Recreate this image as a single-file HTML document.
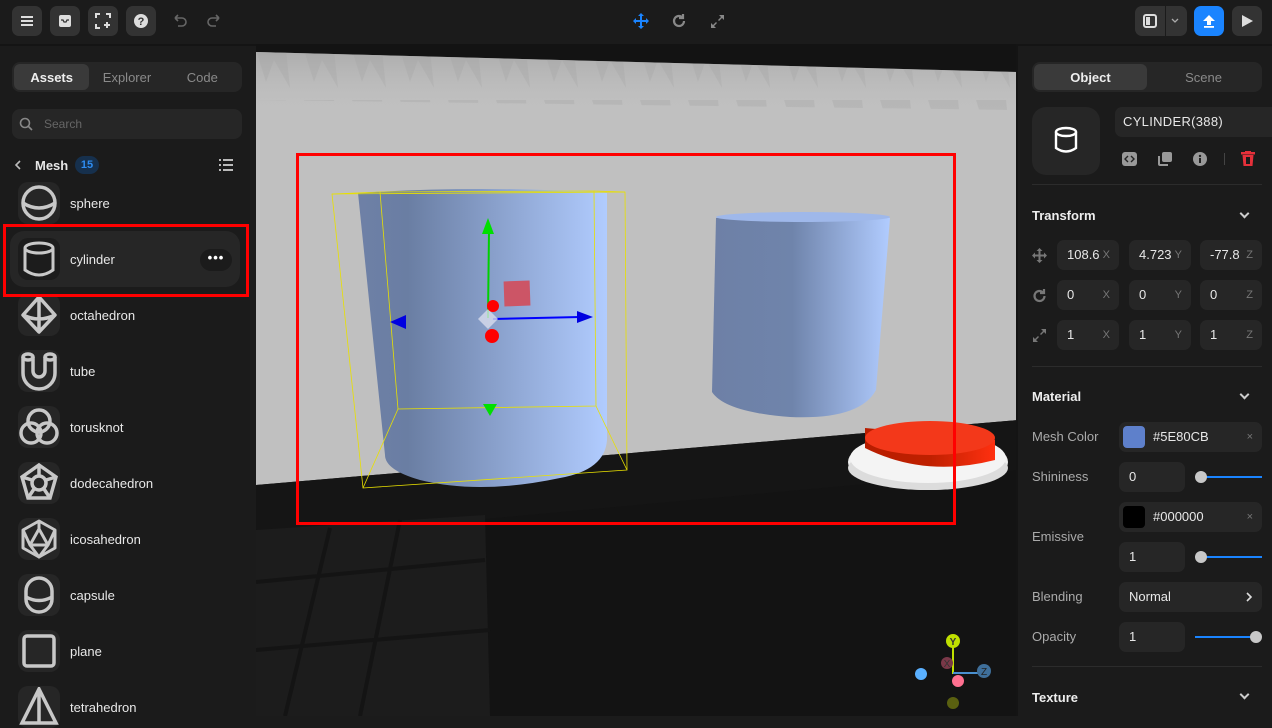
<!DOCTYPE html>
<html><head><meta charset="utf-8"><style>
*{box-sizing:border-box;margin:0;padding:0}
body{width:1272px;height:716px;overflow:hidden;background:#1b1b1b;font-family:"Liberation Sans",sans-serif;color:#e6e6e6;font-size:13px;position:relative}
.a{position:absolute}
.btn{position:absolute;width:30px;height:30px;border-radius:7px;background:#333;display:flex;align-items:center;justify-content:center}
.tabs{position:absolute;height:30px;background:#262626;border-radius:8px;display:flex;padding:2px}
.tabs div{flex:1;display:flex;align-items:center;justify-content:center;color:#8a8a8a;font-size:13px;border-radius:6px}
.tabs .on{background:#3a3a3a;color:#eee;font-weight:bold}
.item{position:absolute;left:18px;width:42px;height:42px;border-radius:10px;background:#262626;display:flex;align-items:center;justify-content:center}
.lbl{position:absolute;left:70px;font-size:13px;color:#e8e8e8}
.f{position:absolute;height:30px;background:#262626;border-radius:7px;font-size:13px;color:#e8e8e8;padding-left:10px;line-height:30px}
.f i{position:absolute;right:9px;font-style:normal;color:#777;font-size:11px}
.h{position:absolute;left:1032px;font-weight:bold;font-size:13px;color:#eee}
.chev{position:absolute;left:1241px;width:7px;height:7px;border-right:2px solid #ccc;border-bottom:2px solid #ccc;transform:rotate(45deg)}
.rl{position:absolute;left:1032px;color:#aaa;font-size:13px}
.div{position:absolute;left:1032px;width:230px;height:1px;background:#2c2c2c}
</style></head><body>
<!-- top bar -->
<div class="a" style="left:0;top:44px;width:1272px;height:2px;background:#141414"></div>
<div class="btn" style="left:12px;top:6px"><svg width="14" height="12"><path d="M1 2h12M1 6h12M1 10h12" stroke="#ddd" stroke-width="2"/></svg></div>
<div class="btn" style="left:50px;top:6px"><svg width="14" height="14"><rect x="1" y="1" width="12" height="12" rx="2" fill="#ddd"/><path d="M3 6h2l1 2h2l1-2h2" stroke="#333" stroke-width="1.3" fill="none"/></svg></div>
<div class="btn" style="left:88px;top:6px"><svg width="16" height="16" fill="none" stroke="#ddd" stroke-width="2"><path d="M1 5V1h4M11 1h4v4M1 11v4h4M12 9v6M9 12h6"/></svg></div>
<div class="btn" style="left:126px;top:6px"><svg width="16" height="16"><circle cx="8" cy="8" r="7" fill="#ddd"/><text x="8" y="12" font-size="11" font-weight="bold" text-anchor="middle" fill="#333" font-family="Liberation Sans">?</text></svg></div>
<svg class="a" style="left:172px;top:14px" width="50" height="16" fill="none" stroke="#666" stroke-width="1.6"><path d="M3 4h7a4 4 0 010 8H6M3 4l3-3M3 4l3 3"/><path d="M47 4h-7a4 4 0 000 8h4M47 4l-3-3M47 4l-3 3"/></svg>
<svg class="a" style="left:632px;top:12px" width="18" height="18"><path d="M9 1l3 3H10v4h4V6l3 3-3 3v-2h-4v4h2l-3 3-3-3h2v-4H4v2L1 9l3-3v2h4V4H6z" fill="#1a84ff"/></svg>
<svg class="a" style="left:671px;top:13px" width="16" height="16" fill="none" stroke="#888" stroke-width="2.2"><path d="M13 8a5 5 0 11-1.5-3.6"/><path d="M12 1v4H8" /></svg>
<svg class="a" style="left:710px;top:14px" width="15" height="15" fill="#888"><path d="M9 1h5v5l-2-2-3 3-1-1 3-3zM6 14H1V9l2 2 3-3 1 1-3 3z"/></svg>
<div class="a" style="left:1135px;top:6px;width:52px;height:30px;border-radius:7px;background:#333"></div>
<div class="a" style="left:1165px;top:6px;width:1px;height:30px;background:#1b1b1b"></div>
<svg class="a" style="left:1143px;top:14px" width="14" height="14"><rect x="1" y="1" width="12" height="12" rx="2" fill="none" stroke="#ddd" stroke-width="2"/><rect x="3" y="3" width="4" height="8" fill="#ddd"/></svg>
<svg class="a" style="left:1171px;top:18px" width="8" height="6"><path d="M1 1l3 3 3-3" stroke="#aaa" fill="none" stroke-width="1.3"/></svg>
<div class="btn" style="left:1194px;top:6px;background:#1a84ff"><svg width="14" height="14"><path d="M7 1l6 6H9v4H5V7H1z" fill="#fff"/><rect x="2" y="12" width="10" height="1.8" fill="#fff"/></svg></div>
<div class="btn" style="left:1232px;top:6px"><svg width="12" height="14"><path d="M1 1l11 6-11 6z" fill="#ddd"/></svg></div>

<!-- left panel -->
<div class="tabs" style="left:12px;top:62px;width:230px"><div class="on">Assets</div><div>Explorer</div><div>Code</div></div>
<div class="a" style="left:12px;top:109px;width:230px;height:30px;background:#262626;border-radius:8px"></div>
<svg class="a" style="left:19px;top:117px" width="14" height="14" fill="none" stroke="#888" stroke-width="1.6"><circle cx="6" cy="6" r="4.5"/><path d="M9.5 9.5L13 13"/></svg>
<div class="a" style="left:44px;top:117px;color:#666;font-size:12px">Search</div>
<svg class="a" style="left:14px;top:160px" width="8" height="10"><path d="M6 1L2 5l4 4" stroke="#bbb" fill="none" stroke-width="1.6"/></svg>
<div class="a" style="left:35px;top:158px;font-weight:bold;font-size:13px">Mesh</div>
<div class="a" style="left:75px;top:156px;width:24px;height:18px;border-radius:9px;background:#16304d;color:#2e8cf0;font-size:11px;text-align:center;line-height:18px;font-weight:bold">15</div>
<svg class="a" style="left:219px;top:158px" width="14" height="14" fill="#bbb"><rect x="0" y="1" width="2" height="2"/><rect x="0" y="6" width="2" height="2"/><rect x="0" y="11" width="2" height="2"/><rect x="4" y="1" width="10" height="2"/><rect x="4" y="6" width="10" height="2"/><rect x="4" y="11" width="10" height="2"/></svg>
<div class="a" style="left:10px;top:231px;width:230px;height:56px;border-radius:14px;background:#262626"></div>
<div class="a" style="left:200px;top:249px;width:32px;height:22px;border-radius:11px;background:#1b1b1b;color:#fff;text-align:center;font-weight:bold;line-height:18px;letter-spacing:1px">•••</div>

<div class="item" style="top:182px;background:#262626"><svg width="36" height="36" fill="none" stroke="#c8c8c8" stroke-width="3.5"><circle cx="18" cy="18" r="16"/><path d="M2 18q16 10 32 0"/></svg></div>
<div class="lbl" style="top:196px">sphere</div>
<div class="item" style="top:238px;background:#1c1c1c"><svg width="36" height="38" fill="none" stroke="#c8c8c8" stroke-width="3"><ellipse cx="18" cy="8" rx="14" ry="5"/><path d="M4 8v22q14 10 28 0V8"/></svg></div>
<div class="lbl" style="top:252px">cylinder</div>
<div class="item" style="top:294px"><svg width="38" height="40" fill="none" stroke="#c8c8c8" stroke-width="3.5" stroke-linejoin="round"><path d="M19 2L35 20 19 37 3 20zM3 20q16 8 32 0M19 2v35"/></svg></div>
<div class="lbl" style="top:308px">octahedron</div>
<div class="item" style="top:350px"><svg width="38" height="40" fill="none" stroke="#c8c8c8" stroke-width="3.5"><path d="M3 6v16a16 16 0 0032 0V6M13 6v14a6 6 0 0012 0V6"/><ellipse cx="8" cy="6" rx="5" ry="3"/><ellipse cx="30" cy="6" rx="5" ry="3"/></svg></div>
<div class="lbl" style="top:364px">tube</div>
<div class="item" style="top:406px"><svg width="40" height="40" fill="none" stroke="#c8c8c8" stroke-width="3.5"><circle cx="20" cy="14" r="11"/><circle cx="12" cy="26" r="10"/><circle cx="28" cy="26" r="10"/></svg></div>
<div class="lbl" style="top:420px">torusknot</div>
<div class="item" style="top:462px"><svg width="40" height="40" fill="none" stroke="#c8c8c8" stroke-width="3.5"><path d="M20 2L37 14 31 35H9L3 14z"/><circle cx="20" cy="20" r="7"/><path d="M20 2v11M37 14l-10 3M31 35l-6-9M9 35l6-9M3 14l10 3"/></svg></div>
<div class="lbl" style="top:476px">dodecahedron</div>
<div class="item" style="top:518px"><svg width="40" height="40" fill="none" stroke="#c8c8c8" stroke-width="3" stroke-linejoin="round"><path d="M20 2l16 9v18l-16 9-16-9V11z"/><path d="M20 10l9 16H11zM20 2v8M4 11l7 15M36 11l-7 15M11 26l9 12 9-12"/></svg></div>
<div class="lbl" style="top:532px">icosahedron</div>
<div class="item" style="top:574px"><svg width="34" height="40" fill="none" stroke="#c8c8c8" stroke-width="3.5"><path d="M4 16a13 13 0 0126 0v8a13 13 0 01-26 0z"/><path d="M4 22q13 7 26 0"/></svg></div>
<div class="lbl" style="top:588px">capsule</div>
<div class="item" style="top:630px"><svg width="36" height="36"><rect x="3" y="3" width="30" height="30" rx="3" fill="none" stroke="#c8c8c8" stroke-width="3.5"/></svg></div>
<div class="lbl" style="top:644px">plane</div>
<div class="item" style="top:686px"><svg width="40" height="40" fill="none" stroke="#c8c8c8" stroke-width="3.5"><path d="M20 2L37 36H3zM20 2v34"/></svg></div>
<div class="lbl" style="top:700px">tetrahedron</div>
<div class="a" style="left:3px;top:224px;width:246px;height:73px;border:3px solid #ff0000"></div>

<!-- viewport -->
<svg class="a" style="left:256px;top:44px" width="762" height="672" viewBox="256 44 762 672">
<defs>
<linearGradient id="c1" x1="0" x2="1"><stop offset="0" stop-color="#6e80a6"/><stop offset="0.2" stop-color="#6a7ea3"/><stop offset="1" stop-color="#b1ccff"/></linearGradient>
<linearGradient id="c2" x1="0" x2="1"><stop offset="0" stop-color="#6e80a6"/><stop offset="0.45" stop-color="#6f84ab"/><stop offset="1" stop-color="#b1ccff"/></linearGradient>
<linearGradient id="rb" x1="0" x2="1"><stop offset="0" stop-color="#b81d00"/><stop offset="0.5" stop-color="#bf2000"/><stop offset="1" stop-color="#ff3010"/></linearGradient>
<linearGradient id="fade" x1="0" y1="0" x2="0" y2="1"><stop offset="0" stop-color="#a0a0a0" stop-opacity="0.6"/><stop offset="1" stop-color="#c0c0c0" stop-opacity="0"/></linearGradient>
<pattern id="saw" x="256" y="50" width="48" height="50" patternUnits="userSpaceOnUse"><path d="M0 0h30L34 38 18 10 10 32z" fill="#a2a2a2" opacity="0.3"/></pattern>
</defs>
<rect x="256" y="44" width="762" height="672" fill="#131313"/>
<polygon points="256,52 1018,72 1018,420 256,485" fill="#c0c0c0"/>
<polygon points="256,52 1018,72 1018,115 256,105" fill="url(#fade)"/>
<polygon points="256,52 1018,72 1018,110 256,100" fill="url(#saw)"/>
<polygon points="256,485 1018,420 1018,470 256,540" fill="#151515"/>
<polygon points="256,530 485,515 490,716 256,716" fill="#1c1c1c"/>
<path d="M256 582L485 560M256 650L490 630M400 520L360 716M330 528L285 716" stroke="#141414" stroke-width="4"/>
<!-- cylinder 1 -->
<path d="M358 193Q480 185 607 193V440Q605 470 560 478Q480 495 420 480Q385 470 385 455Z" fill="url(#c1)"/>
<!-- yellow box -->
<g stroke="#e8e000" stroke-width="0.8" fill="none"><path d="M332 194L625 192 627 470 363 488Z"/><path d="M380 192L594 191 596 406 398 409Z"/><path d="M332 194L380 192M625 192L594 191M627 470L596 406M363 488L398 409"/></g>
<!-- cylinder 2 -->
<path d="M716 218Q800 208 890 218L876 390Q860 420 790 417Q725 412 712 392Z" fill="url(#c2)"/>
<ellipse cx="803" cy="217" rx="87" ry="5" fill="#9fb8ea"/>
<!-- gizmo -->
<path d="M488 318L489 230" stroke="#00d000" stroke-width="2"/><path d="M488 218l-6 16h12z" fill="#00e000"/>
<path d="M493 319L580 317" stroke="#0000ff" stroke-width="2"/><path d="M593 317l-16-6v12z" fill="#0000e0"/>
<path d="M390 322l16-7v14z" fill="#0000e0"/>
<path d="M490 398l-7 12h14z" transform="rotate(180 490 407)" fill="#00e000"/>
<rect x="504" y="281" width="26" height="25" fill="#cc5566" transform="rotate(-2 517 293)"/>
<path d="M478 319l10-10 10 10-10 10z" fill="#d8dcec" opacity="0.8"/>
<circle cx="493" cy="306" r="6" fill="#f00"/><circle cx="492" cy="336" r="7" fill="#f00"/>
<!-- button -->
<ellipse cx="928" cy="462" rx="80" ry="28" fill="#f0f0f0"/>
<ellipse cx="928" cy="468" rx="80" ry="22" fill="#dcdcdc"/>
<ellipse cx="928" cy="458" rx="78" ry="25" fill="#f4f4f4"/>
<path d="M865 428v20q60 30 130 12v-20z" fill="url(#rb)"/>
<ellipse cx="930" cy="438" rx="65" ry="17" fill="#f3381a"/>
<!-- red frame -->
<rect x="297.5" y="154.5" width="657" height="369" fill="none" stroke="#ff0000" stroke-width="3"/>
<!-- axis -->
<path d="M953 643V673H978" stroke="#c0e000" stroke-width="2" fill="none"/><path d="M953 673H978" stroke="#4a90d0" stroke-width="2"/>
<circle cx="947" cy="663" r="6" fill="#7a3848"/><text x="947" y="667" font-size="10" fill="#333" text-anchor="middle" font-family="Liberation Sans">X</text>
<circle cx="953" cy="641" r="7" fill="#c0e000"/><text x="953" y="645" font-size="10" fill="#333" text-anchor="middle" font-family="Liberation Sans" font-weight="bold">Y</text>
<circle cx="984" cy="671" r="7" fill="#3f6f9a"/><text x="984" y="675" font-size="10" fill="#222" text-anchor="middle" font-family="Liberation Sans">Z</text>
<circle cx="921" cy="674" r="6" fill="#5ab0ff"/><circle cx="958" cy="681" r="6" fill="#ff7090"/><circle cx="953" cy="703" r="6" fill="#5a6010"/>
</svg>
<div class="a" style="left:1016px;top:44px;width:2px;height:672px;background:#141414"></div>

<!-- right panel -->
<div class="tabs" style="left:1032px;top:62px;width:230px"><div class="on">Object</div><div>Scene</div></div>
<div class="a" style="left:1032px;top:107px;width:68px;height:68px;border-radius:14px;background:#262626"></div>
<svg class="a" style="left:1053px;top:126px" width="26" height="30" fill="none" stroke="#fff" stroke-width="2.4"><ellipse cx="13" cy="6" rx="10" ry="4"/><path d="M3 6v16q10 7 20 0V6"/></svg>
<div class="f" style="left:1115px;top:107px;width:157px;border-radius:7px 0 0 7px;padding-left:8px;letter-spacing:0.3px">CYLINDER(388)</div>
<svg class="a" style="left:1122px;top:152px" width="15" height="14"><rect width="15" height="14" rx="3" fill="#999"/><path d="M6 4L3 7l3 3M9 4l3 3-3 3" stroke="#222" stroke-width="1.4" fill="none"/></svg>
<svg class="a" style="left:1158px;top:152px" width="14" height="14" fill="#999"><rect x="4" y="0" width="10" height="10" rx="2"/><path d="M0 4h2v8h8v2H2a2 2 0 01-2-2z"/></svg>
<svg class="a" style="left:1193px;top:152px" width="14" height="14"><circle cx="7" cy="7" r="7" fill="#999"/><rect x="6" y="6" width="2" height="5" fill="#222"/><circle cx="7" cy="4" r="1.2" fill="#222"/></svg>
<div class="a" style="left:1224px;top:153px;width:1px;height:12px;background:#444"></div>
<svg class="a" style="left:1241px;top:151px" width="14" height="15" fill="#e5303a"><rect x="0" y="1" width="14" height="2.5"/><rect x="4" y="0" width="6" height="2"/><path d="M1.5 4h11l-1 11h-9zM5 6v7h4V6z" fill-rule="evenodd"/></svg>
<div class="div" style="top:184px"></div>
<div class="h" style="top:208px">Transform</div><div class="chev" style="top:210px"></div>
<svg class="a" style="left:1032px;top:248px" width="15" height="15" fill="#777"><path d="M7.5 0l3 3H8.5v3.5H12V4.5l3 3-3 3V8.5H8.5V12h2l-3 3-3-3h2V8.5H3v2l-3-3 3-3v2h3.5V3h-2z"/></svg>
<svg class="a" style="left:1032px;top:288px" width="15" height="15" fill="none" stroke="#777" stroke-width="2.2"><path d="M12.5 8a5 5 0 11-1.5-3.6"/><path d="M12 1v4H8"/></svg>
<svg class="a" style="left:1032px;top:328px" width="15" height="15" fill="#777"><path d="M9 1h5v5l-2-2-3 3-1-1 3-3zM6 14H1V9l2 2 3-3 1 1-3 3z"/></svg>
<div class="f" style="left:1057px;top:240px;width:62px">108.6<i>X</i></div>
<div class="f" style="left:1129px;top:240px;width:62px">4.723<i>Y</i></div>
<div class="f" style="left:1200px;top:240px;width:62px">-77.8<i>Z</i></div>
<div class="f" style="left:1057px;top:280px;width:62px">0<i>X</i></div>
<div class="f" style="left:1129px;top:280px;width:62px">0<i>Y</i></div>
<div class="f" style="left:1200px;top:280px;width:62px">0<i>Z</i></div>
<div class="f" style="left:1057px;top:320px;width:62px">1<i>X</i></div>
<div class="f" style="left:1129px;top:320px;width:62px">1<i>Y</i></div>
<div class="f" style="left:1200px;top:320px;width:62px">1<i>Z</i></div>
<div class="div" style="top:366px"></div>
<div class="h" style="top:389px">Material</div><div class="chev" style="top:391px"></div>
<div class="rl" style="top:429px">Mesh Color</div>
<div class="f" style="left:1119px;top:422px;width:143px;padding-left:34px">#5E80CB<i>×</i></div>
<div class="a" style="left:1123px;top:426px;width:22px;height:22px;border-radius:4px;background:#5e80cb"></div>
<div class="rl" style="top:469px">Shininess</div>
<div class="f" style="left:1119px;top:462px;width:66px">0</div>
<div class="a" style="left:1201px;top:476px;width:61px;height:2px;background:#1a84ff"></div>
<div class="a" style="left:1195px;top:471px;width:12px;height:12px;border-radius:6px;background:#c8c8c8"></div>
<div class="rl" style="top:529px">Emissive</div>
<div class="f" style="left:1119px;top:502px;width:143px;padding-left:34px">#000000<i>×</i></div>
<div class="a" style="left:1123px;top:506px;width:22px;height:22px;border-radius:4px;background:#000"></div>
<div class="f" style="left:1119px;top:542px;width:66px">1</div>
<div class="a" style="left:1201px;top:556px;width:61px;height:2px;background:#1a84ff"></div>
<div class="a" style="left:1195px;top:551px;width:12px;height:12px;border-radius:6px;background:#c8c8c8"></div>
<div class="rl" style="top:589px">Blending</div>
<div class="f" style="left:1119px;top:582px;width:143px">Normal</div>
<svg class="a" style="left:1245px;top:592px" width="8" height="10"><path d="M2 1l4 4-4 4" stroke="#ddd" fill="none" stroke-width="1.6"/></svg>
<div class="rl" style="top:629px">Opacity</div>
<div class="f" style="left:1119px;top:622px;width:66px">1</div>
<div class="a" style="left:1195px;top:636px;width:61px;height:2px;background:#1a84ff"></div>
<div class="a" style="left:1250px;top:631px;width:12px;height:12px;border-radius:6px;background:#c8c8c8"></div>
<div class="div" style="top:666px"></div>
<div class="h" style="top:690px">Texture</div><div class="chev" style="top:691px"></div>
</body></html>
